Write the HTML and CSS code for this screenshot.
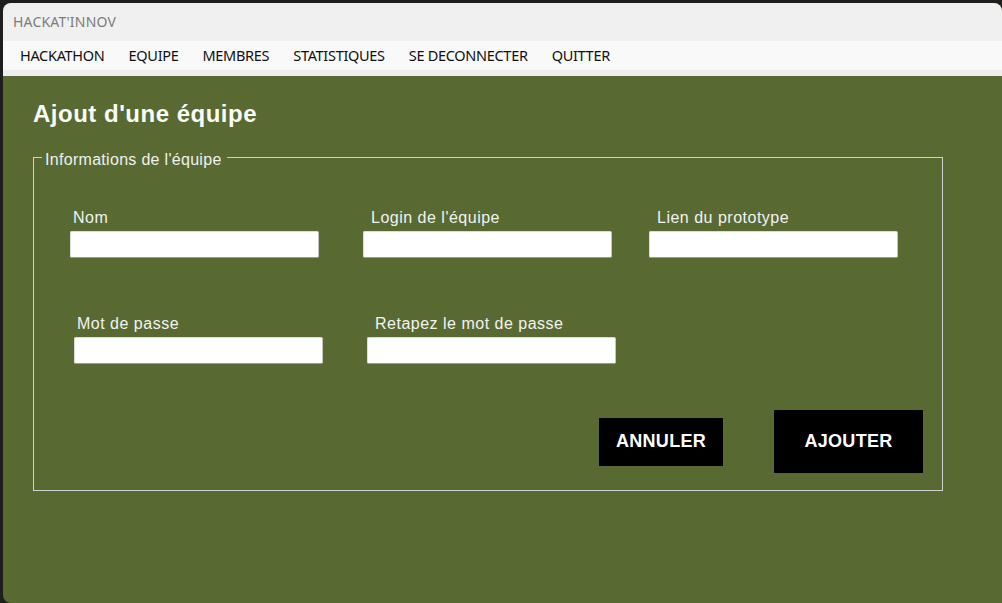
FILE: index.html
```html
<!DOCTYPE html>
<html lang="fr">
<head>
<meta charset="utf-8">
<title>HACKAT'INNOV</title>
<link rel="stylesheet" href="styles.css">
</head>
<body>
<div class="window">
  <div class="titlebar">HACKAT'INNOV</div>
  <nav class="menubar">
    <span class="menu-item">HACKATHON</span>
    <span class="menu-item">EQUIPE</span>
    <span class="menu-item">MEMBRES</span>
    <span class="menu-item">STATISTIQUES</span>
    <span class="menu-item">SE DECONNECTER</span>
    <span class="menu-item">QUITTER</span>
  </nav>
  <main class="content">
    <h1 class="page-title">Ajout d'une équipe</h1>
    <fieldset class="group">
      <legend class="group-title">Informations de l'équipe</legend>
      <div class="row row-1">
        <div class="field f-nom">
          <label class="lbl lbl-near">Nom</label>
          <input class="txt" type="text">
        </div>
        <div class="field f-login">
          <label class="lbl">Login de l'équipe</label>
          <input class="txt" type="text">
        </div>
        <div class="field">
          <label class="lbl">Lien du prototype</label>
          <input class="txt" type="text">
        </div>
      </div>
      <div class="row row-2">
        <div class="field f-mdp">
          <label class="lbl lbl-near">Mot de passe</label>
          <input class="txt" type="password">
        </div>
        <div class="field">
          <label class="lbl">Retapez le mot de passe</label>
          <input class="txt" type="password">
        </div>
      </div>
      <div class="actions">
        <button class="btn btn-cancel">ANNULER</button>
        <button class="btn btn-add">AJOUTER</button>
      </div>
    </fieldset>
  </main>
</div>
</body>
</html>
```
FILE: styles.css
```css
html, body {
  margin: 0;
  padding: 0;
  height: 100%;
  background: #1e1e1e;
  overflow: hidden;
}

.window {
  margin: 3px 0 0 3px;
  height: 600px;
  display: flex;
  flex-direction: column;
  border-radius: 8px 8px 0 8px;
  overflow: hidden;
  background: #586a31;
}

.titlebar {
  height: 38px;
  flex: none;
  background: #f0f0f0;
  color: #7c7c7c;
  font-family: "Noto Sans", sans-serif;
  font-size: 14px;
  letter-spacing: 0.2px;
  line-height: 38px;
  padding-left: 10px;
  box-sizing: border-box;
}

.menubar {
  height: 35px;
  flex: none;
  display: flex;
  align-items: flex-start;
  padding-left: 5px;
  background: #f9f9f9;
  border-bottom: 6px solid #eeeeee;
  box-sizing: border-box;
}

.menu-item {
  font-family: "Noto Sans", sans-serif;
  font-size: 14.5px;
  line-height: 29px;
  color: #111;
  padding: 0 12px;
  letter-spacing: -0.3px;
}

.content {
  flex: 1;
  padding: 24px 0 0 30px;
  font-family: "Liberation Sans", Arial, sans-serif;
  color: #f4f4f4;
}

.page-title {
  margin: 0;
  font-size: 24px;
  line-height: 28px;
  font-weight: bold;
  letter-spacing: 0.5px;
  color: #fafafa;
}

.group {
  margin: 18px 0 0 0;
  width: 910px;
  box-sizing: border-box;
  border: 1px solid #cfcfcf;
  padding: 40px 0 17px 0;
  min-width: 0;
}

.group-title {
  margin-left: 8px;
  padding: 5px 5px 0 3px;
  font-size: 16px;
  line-height: 18px;
  letter-spacing: 0.3px;
  color: #f0f0f0;
}

.row {
  display: flex;
}

.row-1 {
  padding-left: 36px;
  margin-bottom: 57px;
}

.row-2 {
  padding-left: 40px;
}

.f-nom { margin-right: 44px; }
.f-login { margin-right: 37px; }
.f-mdp { margin-right: 44px; }

.field {
  display: flex;
  flex-direction: column;
  width: 249px;
}

.lbl {
  display: block;
  font-size: 16px;
  line-height: 18px;
  letter-spacing: 0.5px;
  color: #f2f2f2;
  padding-left: 8px;
  margin-bottom: 4px;
}

.lbl-near {
  padding-left: 3px;
}

.txt {
  display: block;
  width: 249px;
  height: 27px;
  box-sizing: border-box;
  margin: 0;
  border: 1px solid #dcdcdc;
  border-bottom-color: #9a9a9a;
  border-right-color: #c4c4c4;
  border-radius: 2px;
  background: #ffffff;
  padding: 0 4px;
  font-family: "Liberation Sans", Arial, sans-serif;
  font-size: 15px;
  outline: none;
}

.actions {
  display: flex;
  justify-content: flex-end;
  align-items: center;
  gap: 51px;
  margin-top: 46px;
  padding-right: 19px;
}

.btn {
  background: #000;
  color: #fff;
  border: none;
  margin: 0;
  padding: 0;
  font-family: "Liberation Sans", Arial, sans-serif;
  font-weight: bold;
  font-size: 18px;
  letter-spacing: 0.3px;
  cursor: pointer;
}

.btn-cancel {
  width: 124px;
  height: 48px;
}

.btn-add {
  width: 149px;
  height: 63px;
}
```
